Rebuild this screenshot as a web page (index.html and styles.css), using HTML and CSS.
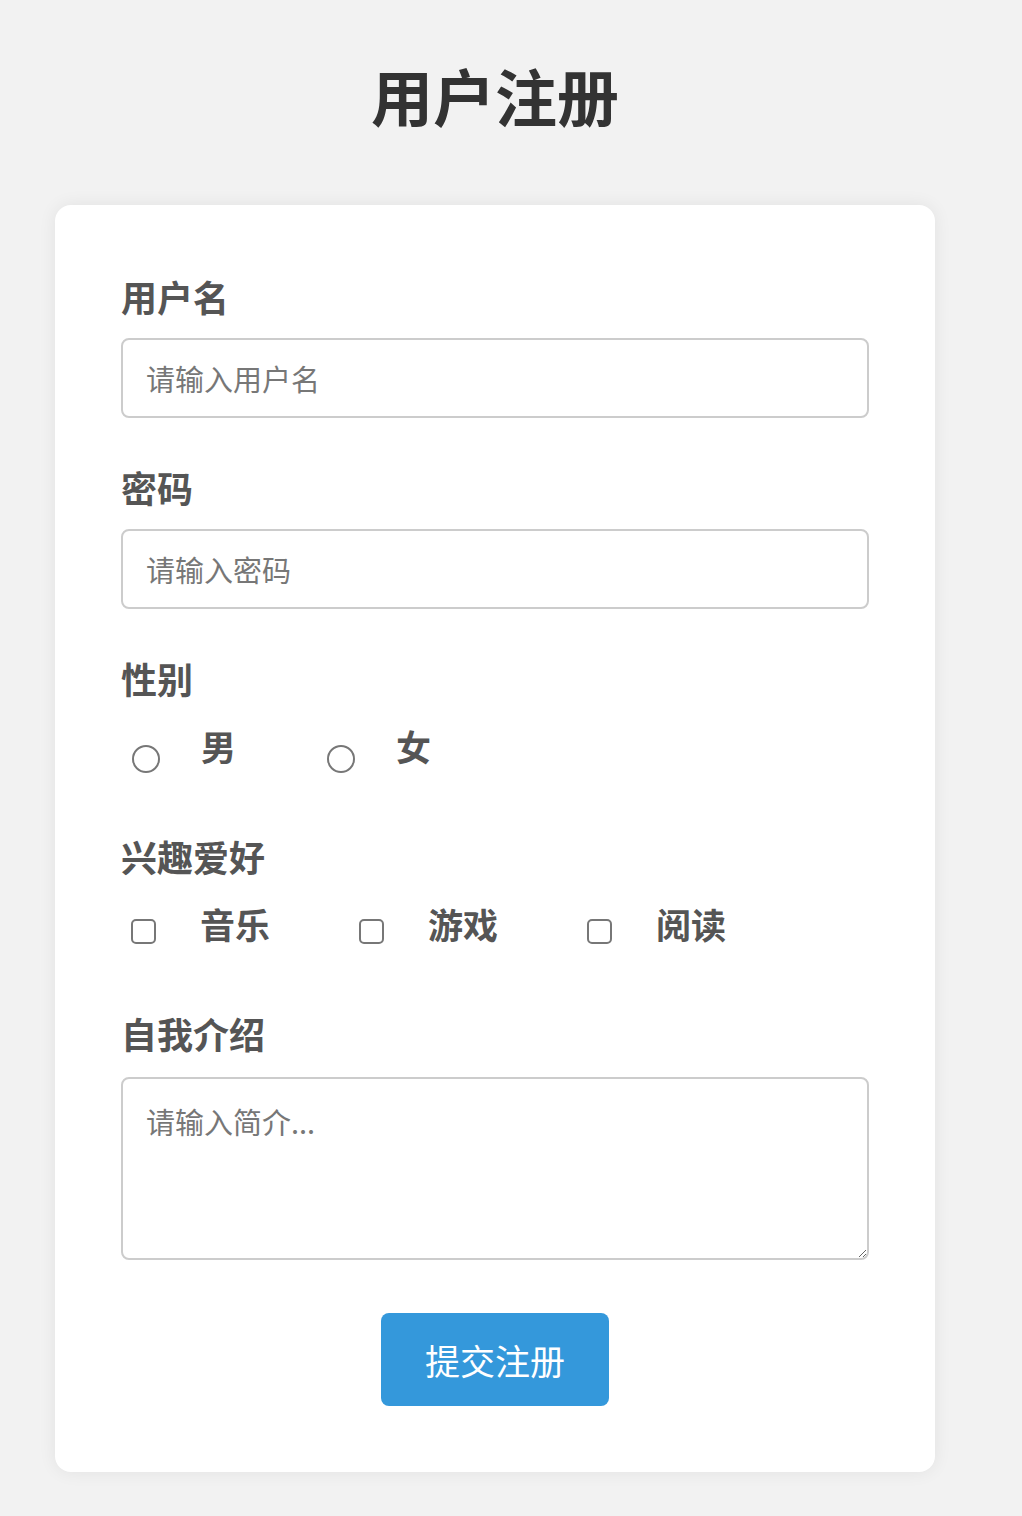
FILE: index.html
```html
<!DOCTYPE html>
<html lang="zh-CN">
<head>
<meta charset="utf-8">
<title>用户注册</title>
<link rel="stylesheet" href="styles.css">
</head>
<body>
<div class="page">
  <h1 class="title">用户注册</h1>
  <form class="card">
    <div class="group">
      <label class="label" for="username">用户名</label>
      <input class="field" id="username" type="text" placeholder="请输入用户名">
    </div>
    <div class="group">
      <label class="label" for="password">密码</label>
      <input class="field" id="password" type="password" placeholder="请输入密码">
    </div>
    <div class="group group-choice group-gender">
      <div class="label">性别</div>
      <div class="options">
        <label class="option option-radio"><input class="radio" type="radio" name="gender"><span class="opt-text">男</span></label>
        <label class="option option-radio"><input class="radio" type="radio" name="gender"><span class="opt-text">女</span></label>
      </div>
    </div>
    <div class="group group-choice group-hobby">
      <div class="label">兴趣爱好</div>
      <div class="options">
        <label class="option option-check"><input class="check" type="checkbox"><span class="opt-text">音乐</span></label>
        <label class="option option-check"><input class="check" type="checkbox"><span class="opt-text">游戏</span></label>
        <label class="option option-check"><input class="check" type="checkbox"><span class="opt-text">阅读</span></label>
      </div>
    </div>
    <div class="group group-last">
      <label class="label" for="intro">自我介绍</label>
      <textarea class="field area" id="intro" placeholder="请输入简介..."></textarea>
    </div>
    <div class="actions">
      <button class="submit" type="button">提交注册</button>
    </div>
  </form>
</div>
</body>
</html>
```
FILE: styles.css
```css
html, body {
  margin: 0;
  padding: 0;
  background: #f2f2f2;
}
body {
  font-family: "Noto Sans CJK SC", "Noto Sans", "Liberation Sans", sans-serif;
  color: #555;
}
.page {
  width: 990px;
  display: flex;
  flex-direction: column;
  align-items: center;
  padding-bottom: 44px;
}
.title {
  margin: 58px 0 73px;
  font-size: 62px;
  line-height: 74px;
  font-weight: 700;
  color: #333;
  letter-spacing: 0;
}
.card {
  box-sizing: border-box;
  width: 880px;
  background: #fff;
  border-radius: 16px;
  padding: 67px 66px 66px;
  box-shadow: 0 0 18px rgba(0, 0, 0, 0.07);
}
.group {
  display: flex;
  flex-direction: column;
  margin-bottom: 45px;
}
.label {
  font-size: 36px;
  line-height: 48px;
  font-weight: 700;
  color: #555;
  margin-bottom: 18px;
}
.field {
  box-sizing: border-box;
  width: 748px;
  height: 80px;
  border: 2px solid #ccc;
  border-radius: 8px;
  padding: 0 23px;
  font-family: inherit;
  font-size: 29px;
  color: #333;
  background: #fff;
  outline: none;
  margin: 0;
}
.field::placeholder {
  color: #777;
}
.area {
  height: 183px;
  padding: 22px 23px;
  line-height: 40px;
  resize: vertical;
  display: block;
}
.group-gender {
  margin-bottom: 62px;
}
.group-hobby {
  margin-bottom: 61px;
}
.group-choice .label {
  margin-bottom: 20px;
}
.options {
  display: flex;
  height: 48px;
}
.option {
  display: flex;
  align-items: flex-start;
  cursor: pointer;
}
.opt-text {
  font-size: 35px;
  line-height: 48px;
  font-weight: 700;
  color: #555;
}
.radio,
.check {
  appearance: none;
  -webkit-appearance: none;
  margin: 0;
  box-sizing: border-box;
  background: #fff;
  flex: none;
}
.radio {
  width: 28px;
  height: 28px;
  border: 2px solid #777;
  border-radius: 50%;
  margin-top: 23px;
  margin-right: 41px;
}
.option-radio {
  margin-right: 91px;
}
.check {
  width: 25px;
  height: 25px;
  border: 2px solid #777;
  border-radius: 5px;
  margin-top: 19px;
  margin-right: 44px;
}
.option-check {
  margin-right: 89px;
}
.option-radio:first-child {
  margin-left: 11px;
}
.option-check:first-child {
  margin-left: 10px;
}
.group-last {
  margin-bottom: 53px;
}
.group-last .label {
  margin-bottom: 20px;
}
.actions {
  display: flex;
  justify-content: center;
}
.submit {
  width: 228px;
  height: 93px;
  border: none;
  border-radius: 8px;
  background: #3498db;
  color: #fff;
  font-family: inherit;
  font-size: 35px;
  font-weight: 400;
  cursor: pointer;
}
```
